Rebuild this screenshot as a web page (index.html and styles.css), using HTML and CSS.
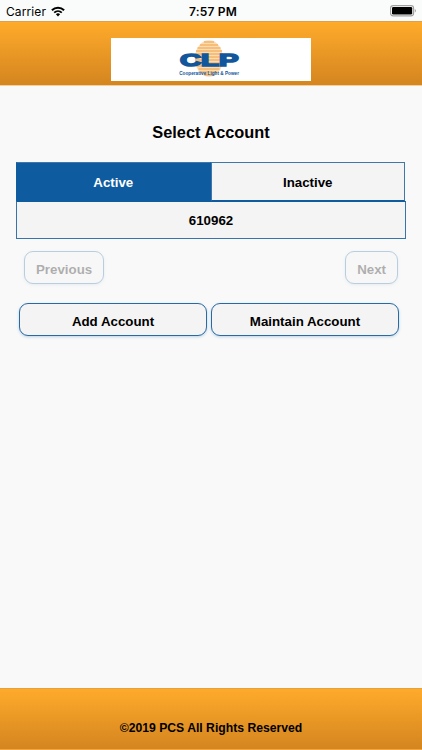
FILE: index.html
```html
<!DOCTYPE html>
<html lang="en">
<head>
  <meta charset="UTF-8">
  <meta name="viewport" content="width=device-width, initial-scale=1.0">
  <title>Select Account</title>
  <link rel="stylesheet" href="styles.css">
</head>
<body>

<!-- Status bar -->
<div class="status-bar">
  <div class="carrier">
    <span>Carrier</span>
    <svg class="wifi" width="14" height="11" viewBox="0 0 14 11">
      <path d="M0.9 4.2a8.7 8.7 0 0 1 12.2 0" fill="none" stroke="#000" stroke-width="2"/>
      <path d="M3.2 6.7a5.5 5.5 0 0 1 7.6 0" fill="none" stroke="#000" stroke-width="1.8"/>
      <path d="M4.9 8.3a3 3 0 0 1 4.2 0L7 10.5z"/>
    </svg>
  </div>
  <span class="time">7:57 PM</span>
  <div class="battery">
    <svg width="27" height="12" viewBox="0 0 27 12">
      <rect x="0.6" y="0.6" width="23" height="10.3" rx="2.6" fill="#fff" stroke="#a0a0a0" stroke-width="1.1"/>
      <rect x="2" y="2" width="20.2" height="7.5" rx="1.3"/>
      <path d="M24.8 4a2 2 0 0 1 0 3.6z" fill="#a0a0a0"/>
    </svg>
  </div>
</div>

<!-- Header -->
<header class="header">
  <div class="logo">
    <svg width="76" height="43" viewBox="0 0 76 43">
      <ellipse cx="38" cy="20.5" rx="14" ry="18.3" fill="#fbdcb4"/>
      <path d="M33 4h10M29 7h18M26.5 10h23M25 13h26M24.2 16h27.6M24 19h28M24 22h28M24.4 25h27.2M25.5 28h25M27.5 31h21M30 34h16M33.5 37h9" fill="none" stroke="#f6b467" stroke-width="1.5"/>
      <text class="logo-name" x="9" y="28.2" textLength="58.5" lengthAdjust="spacingAndGlyphs">CLP</text>
      <text class="logo-sub" x="8.2" y="36.6" textLength="59.8" lengthAdjust="spacingAndGlyphs">Cooperative Light &amp; Power</text>
    </svg>
  </div>
</header>

<!-- Accounts -->
<main class="content">
  <h1>Select Account</h1>

  <div class="tabs">
    <button class="tab active">Active</button>
    <button class="tab">Inactive</button>
  </div>
  <div class="account">610962</div>

  <div class="pager">
    <button class="btn" disabled>Previous</button>
    <button class="btn" disabled>Next</button>
  </div>

  <div class="actions">
    <button class="btn">Add Account</button>
    <button class="btn">Maintain Account</button>
  </div>
</main>

<footer class="footer">©2019 PCS All Rights Reserved</footer>

</body>
</html>
```

FILE: styles.css
```css
* {
  margin: 0;
  padding: 0;
  box-sizing: border-box;
}

html, body {
  height: 100%;
}

body {
  display: flex;
  flex-direction: column;
  font-family: "Liberation Sans", Arial, sans-serif;
  font-weight: bold;
  color: #000;
  background-color: #f9f9f9;
}

/* Status bar */
.status-bar {
  display: grid;
  grid-template-columns: 1fr auto 1fr;
  align-items: center;
  height: 21px;
  padding: 1px 6px 0;
  font-family: Inter, sans-serif;
  font-size: 12px;
  font-weight: 400;
  background-color: #fafcfb;
}

.carrier {
  display: flex;
  align-items: center;
  gap: 5px;
  letter-spacing: 0.1px;
}

.time {
  font-weight: 600;
  padding-left: 4px;
  letter-spacing: 0.2px;
}

.battery {
  display: flex;
  justify-content: flex-end;
}

.battery svg {
  margin-right: -1px;
}

/* Header */
.header {
  display: flex;
  justify-content: center;
  height: 65px;
  padding-top: 16px;
  border-top: 1px solid #dda04d;
  border-bottom: 1px solid #f3cf9c;
  background: linear-gradient(#feab2b, #d4851f);
}

.logo {
  display: flex;
  justify-content: center;
  width: 200px;
  height: 43px;
  padding-right: 4px;
  background-color: #fff;
}

.logo-name {
  font-size: 17px;
  fill: #12579b;
  stroke: #12579b;
  stroke-width: 1.6px;
}

.logo-sub {
  font-size: 5.4px;
  fill: #12579b;
}

/* Accounts */
.content {
  flex: 1;
  padding: 36px 16px 0;
}

h1 {
  height: 40px;
  font-size: 16.35px;
  line-height: 20px;
  text-align: center;
}

button {
  font: inherit;
  color: inherit;
}

.tabs {
  display: flex;
  height: 39px;
  margin-right: 1px;
}

.tab {
  flex: 1;
  padding-top: 1px;
  font-size: 13.3px;
  background-color: #f4f4f4;
  border: 1px solid #3f77a8;
  border-bottom-color: #0e5c9f;
}

.tab.active {
  color: #fff;
  background-color: #0e5c9f;
  border-color: #3f77a8 #0e5c9f #0e5c9f;
}

.account {
  height: 38px;
  font-size: 13.3px;
  line-height: 37px;
  text-align: center;
  background-color: #f4f4f4;
  border: 1px solid #3874a8;
  border-top-color: #0e5c9f;
}

.btn {
  height: 33px;
  padding-top: 3px;
  font-size: 13.3px;
  background-color: #f4f4f4;
  border: 1px solid #2a6aa3;
  border-radius: 9px;
  box-shadow: 0 1px 3px rgba(40, 120, 190, 0.3);
}

.btn:disabled {
  opacity: 0.3;
}

.pager {
  display: flex;
  justify-content: space-between;
  padding: 12px 8px 0;
}

.pager .btn {
  padding-left: 11px;
  padding-right: 11px;
}

.actions {
  display: flex;
  gap: 4px;
  padding: 19px 7px 0 3px;
}

.actions .btn {
  flex: 1;
}

/* Footer */
.footer {
  height: 62px;
  padding-top: 32px;
  font-size: 12.2px;
  line-height: 15px;
  text-align: center;
  border-top: 1px solid #e6a13c;
  border-bottom: 1px solid #f3a63c;
  background: linear-gradient(#feab2b, #d4851f);
}
```
